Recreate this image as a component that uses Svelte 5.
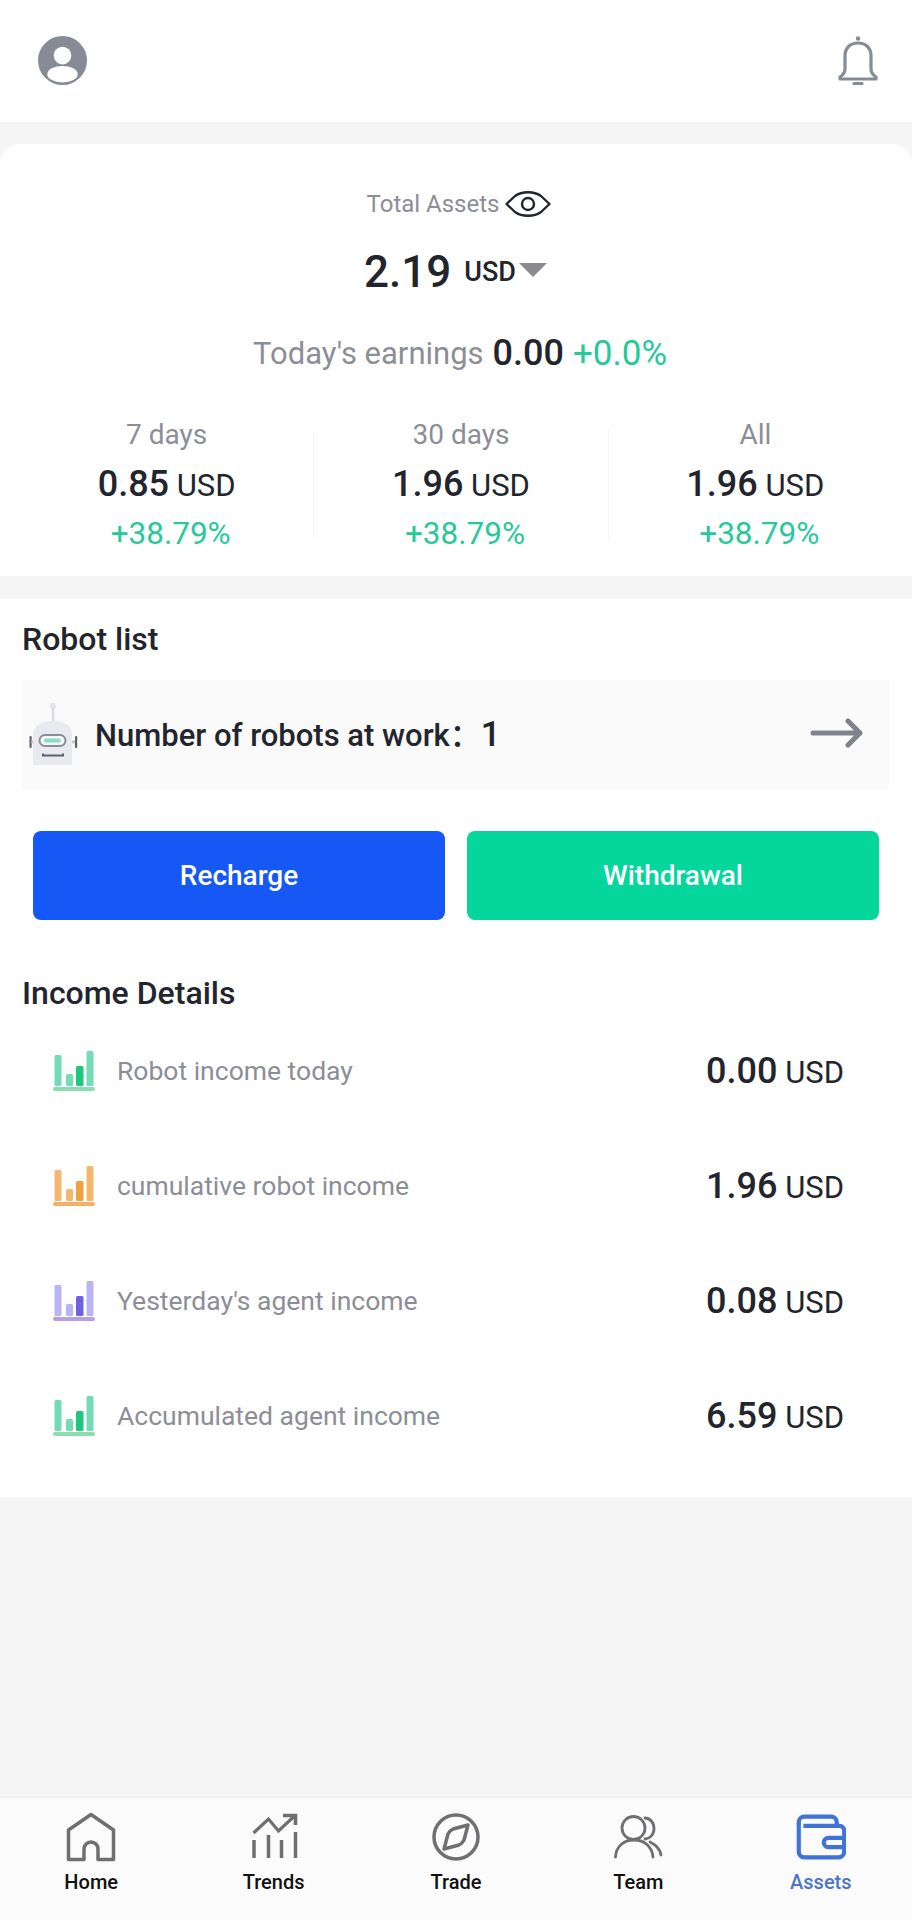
<script>
  const stats = [
    { label: '7 days', value: '0.85' },
    { label: '30 days', value: '1.96' },
    { label: 'All', value: '1.96' }
  ];
  const income = [
    { label: 'Robot income today', value: '0.00', a: '#74dcb4', b: '#1fc77e', c: '#8bdcb0' },
    { label: 'cumulative robot income', value: '1.96', a: '#f5b76d', b: '#eea13f', c: '#f3b066' },
    { label: "Yesterday's agent income", value: '0.08', a: '#b9b4f2', b: '#6d62e0', c: '#b59fe4' },
    { label: 'Accumulated agent income', value: '6.59', a: '#74dcb4', b: '#1fc77e', c: '#8bdcb0' }
  ];
  const nav = ['Home', 'Trends', 'Trade', 'Team', 'Assets'];
</script>

<div class="page">
  <header class="top">
    <svg class="avatar" viewBox="0 0 50 50">
      <circle cx="25" cy="25" r="25" fill="#878b96" />
      <ellipse cx="25" cy="20" rx="9" ry="9" fill="#fff" />
      <ellipse cx="25" cy="39" rx="15.500" ry="8.500" fill="#fff" />
    </svg>
    <svg class="bell" viewBox="0 0 40 50" fill="none" stroke="#878b96" stroke-width="3.200">
      <circle cx="20" cy="2.500" r="2.200" fill="#878b96" stroke="none" />
      <path d="M20 7C12 7 7 12 7 20v13c0 4-2 6-5 8v2h36v-2c-3-2-5-4-5-8V20c0-8-5-13-13-13z" stroke-linejoin="round" />
      <path d="M16 47.500h8" stroke-linecap="round" />
    </svg>
  </header>

  <section class="card">
    <div class="total">
      <span>Total Assets</span>
      <svg class="eye" viewBox="0 0 46 26" fill="none" stroke="#23252e" stroke-width="2.400">
        <path d="M1.500 13 10 5c4-3 8-3.800 13-3.800S32 2 36 5l8.500 8-8.500 8c-4 3-8 3.800-13 3.800S14 24 10 21z" stroke-linejoin="round" />
        <circle cx="23" cy="13" r="6" />
      </svg>
    </div>
    <div class="balance">
      <span class="big">2.19</span>
      <span class="cur">USD</span>
      <span class="caret"></span>
    </div>
    <div class="today">
      <span class="muted">Today's earnings</span>
      <span class="strong">0.00</span>
      <span class="green">+0.0%</span>
    </div>
    <div class="stats">
      {#each stats as s}
        <div class="stat">
          <div class="stat-label">{s.label}</div>
          <div class="stat-value"><b>{s.value}</b> USD</div>
          <div class="stat-pct">+38.79%</div>
        </div>
      {/each}
    </div>
  </section>

  <section class="panel">
    <h2 class="robot-title">Robot list</h2>
    <div class="robots">
      <svg class="robot" viewBox="0 0 52 66">
        <circle cx="25" cy="4" r="3.200" fill="#e4e5ea" />
        <rect x="23.800" y="6" width="2.500" height="14" fill="#d8dae0" />
        <path d="M5 63V33c0-9 8-14 20-14s19 5 19 14v30z" fill="#e9eaef" />
        <rect x="1.500" y="34" width="2.200" height="12" rx="1" fill="#5f626c" />
        <rect x="47" y="34" width="2.200" height="12" rx="1" fill="#5f626c" />
        <rect x="3.500" y="38.500" width="2" height="3" fill="#c5c7cf" />
        <rect x="44" y="38.500" width="3" height="3" fill="#c5c7cf" />
        <rect x="11.500" y="33" width="26" height="11" rx="5.500" fill="#f5f6f8" stroke="#8a8d97" stroke-width="2" />
        <rect x="16" y="36.500" width="17" height="4" rx="2" fill="#86dfc3" />
        <path d="M15 51.500v2h20v-2" fill="none" stroke="#5f626c" stroke-width="2" />
      </svg>
      <span class="robot-text">Number of robots at work：</span>
      <span class="robot-count">1</span>
      <svg class="arrow" viewBox="0 0 54 30" fill="none" stroke="#7f838d" stroke-width="5" stroke-linecap="round" stroke-linejoin="round">
        <path d="M3 15h47M38 3l12 12-12 12" />
      </svg>
    </div>
    <div class="actions">
      <div class="btn blue">Recharge</div>
      <div class="btn teal">Withdrawal</div>
    </div>
    <h2 class="income-title">Income Details</h2>
    <div class="rows">
      {#each income as r}
        <div class="row">
          <svg class="bars" viewBox="0 0 42 40">
            <rect x="1.500" y="4" width="7" height="31" rx="1.500" fill={r.a} />
            <rect x="13" y="23" width="7" height="12" rx="1.500" fill={r.a} />
            <rect x="23" y="15" width="7.500" height="20" rx="1.500" fill={r.b} />
            <rect x="33.500" y="0" width="7" height="35" rx="1.500" fill={r.a} />
            <rect x="0" y="36" width="42" height="4" rx="2" fill={r.c} />
          </svg>
          <span class="row-label">{r.label}</span>
          <span class="row-value"><b>{r.value}</b> USD</span>
        </div>
      {/each}
    </div>
  </section>

  <div class="spacer"></div>

  <nav class="nav">
    {#each nav as item}
      <div class="nav-item" class:active={item === 'Assets'}>
        {#if item === 'Home'}
          <svg viewBox="0 0 50 50" fill="none" stroke="#6f6f72" stroke-width="3.500">
            <path d="M2.500 18 25 2.500 47.500 18v29.500H32V37a7 7 0 0 0-14 0v10.500H2.500z" stroke-linejoin="round" />
          </svg>
        {:else if item === 'Trends'}
          <svg viewBox="0 0 50 50" fill="none" stroke="#6f6f72" stroke-width="3.500">
            <path d="M4.500 21 19.500 7l10 12L46 3.500" stroke-width="3.200" />
            <path d="M34 3.500h12.500V13" stroke-width="3.600" />
            <path d="M5 28v18M19.500 23v23M32.500 28v18M46.500 20v26" />
          </svg>
        {:else if item === 'Trade'}
          <svg viewBox="0 0 50 50" fill="none" stroke="#6f6f72" stroke-width="3.500">
            <circle cx="25" cy="25" r="22" />
            <path d="M37 13 33 28c-1 2-3 4-5 5l-15 4 4-15c1-2 3-4 5-5z" stroke-linejoin="round" />
          </svg>
        {:else if item === 'Team'}
          <svg viewBox="0 0 50 50" fill="none" stroke="#6f6f72" stroke-width="2.800" stroke-linecap="round">
            <circle cx="20.500" cy="16" r="11.500" />
            <path d="M2.500 45C3 35 10 28 21 28s18 7 19 17" />
            <path d="M32 6c5 0 9 4.500 9 10.500s-4 10-9 10.500M37 30c6 3 10 7 11 13" />
          </svg>
        {:else}
          <svg viewBox="0 0 54 50" fill="none" stroke="#3f74d6" stroke-width="4.500" stroke-linejoin="round">
            <path d="M3 12V9a6 6 0 0 1 6-6h29a6 6 0 0 1 6 6v4" />
            <path d="M3 10v31a6 6 0 0 0 6 6h37a6 6 0 0 0 6-6V18a5 5 0 0 0-5-5H8" />
            <path d="M52 26H35a5 5 0 0 0 0 10h17" />
          </svg>
        {/if}
        <span>{item}</span>
      </div>
    {/each}
  </nav>
</div>

<style>
  :global(body) {
    margin: 0;
    background: #f5f5f5;
  }
  .page {
    width: 912px;
    height: 1920px;
    display: flex;
    flex-direction: column;
    background: #f5f5f5;
    font-family: Roboto, "Noto Sans CJK SC", "Liberation Sans", sans-serif;
    color: #23252e;
    overflow: hidden;
  }
  .top {
    height: 122px;
    flex: none;
    background: #fff;
    display: flex;
    align-items: flex-start;
    justify-content: space-between;
    padding: 36px 34px 0 38px;
    box-sizing: border-box;
  }
  .avatar { width: 49px; height: 49px; }
  .bell { width: 40px; height: 50px; }

  .card {
    margin-top: 22px;
    height: 432px;
    flex: none;
    background: #fff;
    border-radius: 20px 20px 0 0;
    display: flex;
    flex-direction: column;
    align-items: center;
    box-sizing: border-box;
    padding-top: 44px;
  }
  .total {
    display: flex;
    align-items: center;
    gap: 6px;
    height: 32px;
    font-size: 24px;
    color: #8c8e97;
    margin-left: 6px;
  }
  .eye { width: 46px; height: 26px; }
  .balance {
    display: flex;
    align-items: center;
    height: 48px;
    margin: 28px 1px 0 0;
  }
  .big { font-size: 44px; font-weight: 500; }
  .cur { font-size: 27px; font-weight: 500; margin-left: 13px; }
  .caret {
    width: 0;
    height: 0;
    margin: -4px 0 0 3px;
    border-left: 14px solid transparent;
    border-right: 14px solid transparent;
    border-top: 14px solid #8a8a8f;
  }
  .today {
    display: flex;
    align-items: center;
    gap: 9px;
    height: 44px;
    margin: 35px 0 0 8px;
    font-size: 31px;
  }
  .muted { color: #8c8e97; }
  .strong { font-weight: 500; font-size: 36px; }
  .green { color: #25c99a; font-size: 35px; }
  .stats {
    display: flex;
    width: 882px;
    margin: 55px 10px 0 20px;
  }
  .stat {
    flex: 1;
    height: 110px;
    text-align: center;
    border-right: 1px solid #f5f5f5;
  }
  .stat:last-child { border-right: none; }
  .stat-label {
    font-size: 28px;
    color: #8c8e97;
    line-height: 32px;
    margin-top: -11px;
  }
  .stat-value {
    font-size: 31px;
    line-height: 40px;
    margin-top: 13px;
  }
  .stat-value b { font-size: 36px; font-weight: 500; }
  .stat-pct {
    font-size: 31.500px;
    color: #25c99a;
    line-height: 36px;
    margin: 10px 0 0 8px;
  }

  .panel {
    margin-top: 23px;
    height: 898px;
    flex: none;
    background: #fff;
    box-sizing: border-box;
    padding: 0 22px;
  }
  h2 {
    margin: 0;
    font-size: 32px;
    font-weight: 500;
    line-height: 40px;
  }
  .robot-title { margin-top: 20px; }
  .robots {
    height: 110px;
    margin: 21px 1px 0 0;
    background: #fafafa;
    display: flex;
    align-items: center;
    box-sizing: border-box;
    padding: 0 25px 0 6px;
  }
  .robot { width: 52px; height: 66px; flex: none; }
  .robot-text {
    margin: 0 0 6px 15px;
    font-size: 31px;
    font-weight: 500;
  }
  .robot-count {
    font-size: 35px;
    font-weight: 500;
    margin-bottom: 2px;
  }
  .arrow { width: 54px; height: 30px; margin: 0 0 4px auto; }
  .actions {
    display: flex;
    gap: 22px;
    margin: 41px 11px 0;
  }
  .btn {
    flex: 1;
    height: 89px;
    border-radius: 8px;
    display: flex;
    align-items: center;
    justify-content: center;
    color: #fff;
    font-size: 28px;
    font-weight: 500;
  }
  .blue { background: #1558f5; }
  .teal { background: #05d69c; }
  .income-title { margin-top: 53px; }
  .rows {
    display: flex;
    flex-direction: column;
  }
  .row {
    height: 115px;
    display: flex;
    align-items: center;
    padding: 0 46px 0 31px;
    box-sizing: border-box;
  }
  .bars { width: 42px; height: 40px; flex: none; }
  .row-label {
    margin-left: 22px;
    font-size: 26.500px;
    color: #8c8e97;
  }
  .row-value {
    margin-left: auto;
    font-size: 31px;
  }
  .row-value b { font-size: 36px; font-weight: 500; }

  .spacer { flex: 1; }
  .nav {
    height: 122px;
    flex: none;
    background: #fbfbfb;
    display: flex;
    box-shadow: 0 -1px 2px rgba(0, 0, 0, 0.03);
  }
  .nav-item {
    flex: 1;
    display: flex;
    flex-direction: column;
    align-items: center;
    padding-top: 14px;
    font-size: 20px;
    font-weight: 500;
    color: #111;
  }
  .nav-item svg { width: 50px; height: 50px; }
  .nav-item span { margin-top: 8px; line-height: 24px; }
  .active { color: #4a76c4; }
</style>
